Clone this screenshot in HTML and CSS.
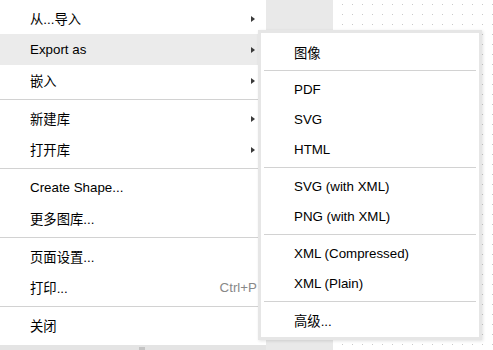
FILE: index.html
```html
<!DOCTYPE html>
<html lang="zh">
<head>
    <meta charset="UTF-8">
    <title>Menu</title>
    <link rel="stylesheet" href="styles.css">
</head>
<body>
    <div id="workspace">
        <div id="left-col">
            <div id="main-menu" class="popup">
                <div class="item">从...导入<span class="arrow"></span></div>
                <div class="item active">Export as<span class="arrow"></span></div>
                <div class="item">嵌入<span class="arrow"></span></div>
                <div class="sep"></div>
                <div class="item">新建库<span class="arrow"></span></div>
                <div class="item">打开库<span class="arrow"></span></div>
                <div class="sep"></div>
                <div class="item">Create Shape...</div>
                <div class="item">更多图库...</div>
                <div class="sep"></div>
                <div class="item">页面设置...</div>
                <div class="item">打印...<span class="shortcut">Ctrl+P</span></div>
                <div class="sep"></div>
                <div class="item">关闭</div>
            </div>
            <div id="footer"><span class="thumb"></span></div>
        </div>
        <div id="strip"></div>
        <div id="canvas"></div>
    </div>
    <div id="sub-menu" class="popup">
        <div class="item">图像</div>
        <div class="sep"></div>
        <div class="item">PDF</div>
        <div class="item">SVG</div>
        <div class="item">HTML</div>
        <div class="sep"></div>
        <div class="item">SVG (with XML)</div>
        <div class="item">PNG (with XML)</div>
        <div class="sep"></div>
        <div class="item">XML (Compressed)</div>
        <div class="item">XML (Plain)</div>
        <div class="sep"></div>
        <div class="item">高级...</div>
    </div>
</body>
</html>
```

FILE: styles.css
```css
body {
    margin: 0;
    width: 493px;
    height: 350px;
    overflow: hidden;
    position: relative;
    background-color: #e9e9e9;
    font-family: 'Liberation Sans', 'Noto Sans CJK SC', sans-serif;
    font-size: 13.33px;
    color: #000;
}
#workspace {
    display: flex;
    height: 350px;
}
#left-col {
    width: 266px;
    display: flex;
    flex-direction: column;
}
#main-menu {
    background-color: #fff;
    padding: 3px 0 4px;
    box-shadow: 0 1px 2px rgba(0, 0, 0, 0.12);
}
#main-menu .item {
    height: 31px;
    padding: 0 11px 0 30px;
}
#main-menu .sep {
    margin: 3px 3px 3px 0;
}
#footer {
    flex: 1;
    position: relative;
    background-color: #e4e4e4;
}
#footer .thumb {
    position: absolute;
    left: 139px;
    top: 2px;
    width: 6px;
    height: 6px;
    background-color: #c4c4c4;
}
#strip {
    width: 67px;
    background-color: #e9e9e9;
}
#canvas {
    flex: 1;
    background-color: #fff;
    background-image: radial-gradient(circle at 0.5px 0.5px, #c9c9c9 0.8px, transparent 0.9px);
    background-size: 10px 10px;
    background-position: 9px 4px;
}
.item {
    display: flex;
    align-items: center;
    justify-content: space-between;
    white-space: nowrap;
}
.item.active {
    background-color: #ebebeb;
}
.arrow {
    width: 0;
    height: 0;
    border-left: 4px solid #3a3a3a;
    border-top: 3.5px solid transparent;
    border-bottom: 3.5px solid transparent;
}
.shortcut {
    color: #888;
    margin-right: -2px;
}
.sep {
    height: 0;
    border-top: 1px solid #d2d2d2;
}
#sub-menu {
    position: absolute;
    left: 258px;
    top: 30px;
    width: 218px;
    padding: 4px 0 2px;
    background-color: #fff;
    border: 3px solid #e6e6e6;
    box-shadow: 1px 1px 3px rgba(0, 0, 0, 0.12);
}
#sub-menu .item {
    height: 30px;
    padding: 0 20px 0 33px;
}
#sub-menu .sep {
    margin: 3px 3px;
}
```
